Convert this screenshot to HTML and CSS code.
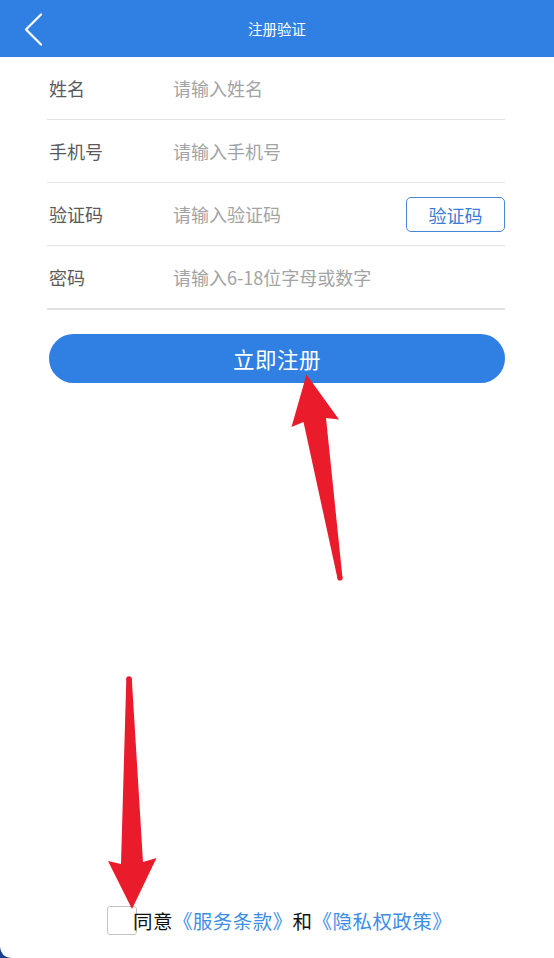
FILE: index.html
```html
<!DOCTYPE html>
<html lang="zh-CN">
<head>
<meta charset="utf-8">
<title>注册验证</title>
<link rel="stylesheet" href="styles.css">
</head>
<body>
<div class="page">
  <header class="topbar">
    <button class="back" aria-label="返回">
      <svg width="20" height="34" viewBox="0 0 20 34"><polyline points="17,1.5 2,16.5 17,31.5" fill="none" stroke="#fff" stroke-width="2.2" stroke-linecap="round" stroke-linejoin="round"/></svg>
    </button>
    <h1 class="title">注册验证</h1>
  </header>

  <form class="form">
    <div class="row">
      <label class="label">姓名</label>
      <input class="field" type="text" placeholder="请输入姓名">
    </div>
    <div class="row">
      <label class="label">手机号</label>
      <input class="field" type="tel" placeholder="请输入手机号">
    </div>
    <div class="row">
      <label class="label">验证码</label>
      <input class="field" type="text" placeholder="请输入验证码">
      <button type="button" class="code-btn">验证码</button>
    </div>
    <div class="row last">
      <label class="label">密码</label>
      <input class="field" type="password" placeholder="请输入6-18位字母或数字">
    </div>
    <button type="button" class="submit">立即注册</button>
  </form>

  <div class="agree">
    <span class="check"></span>
    <span class="agree-text">同意<a class="link">《服务条款》</a>和<a class="link">《隐私权政策》</a></span>
  </div>

  <svg class="annot" width="554" height="958" viewBox="0 0 554 958" aria-hidden="true">
    <polygon fill="#EA1B2A" points="306.5,374.5 339,419.5 326,418 342.5,578 337.5,578.5 303.5,422 291.5,427"/>
    <circle cx="340" cy="578" r="2.6" fill="#EA1B2A"/>
    <polygon fill="#EA1B2A" points="126.3,679 131.8,679 143,862 156.5,858 132,909 108,861 121,864"/>
    <circle cx="129" cy="679" r="2.8" fill="#EA1B2A"/>
    <path d="M0 947 Q1 957 11 958 L0 958 Z" fill="#1E3F8C"/>
  </svg>
</div>
</body>
</html>
```

FILE: styles.css
```css
* { box-sizing: border-box; }

html, body {
  margin: 0;
  padding: 0;
  background: #fff;
}

body {
  font-family: "Noto Sans CJK SC", "Noto Sans", "Liberation Sans", sans-serif;
}

.page {
  position: relative;
  width: 554px;
  height: 958px;
  display: flex;
  flex-direction: column;
  overflow: hidden;
}

.topbar {
  height: 57px;
  background: #3080E4;
  display: flex;
  align-items: center;
  justify-content: center;
  position: relative;
  flex-shrink: 0;
}

.back {
  position: absolute;
  left: 24px;
  top: 13px;
  width: 20px;
  height: 34px;
  padding: 0;
  border: 0;
  background: transparent;
  display: flex;
}

.title {
  margin: 0;
  font-size: 14.5px;
  font-weight: normal;
  color: #fff;
  letter-spacing: 0;
}

.form {
  margin: 0 49px 0 47px;
  display: flex;
  flex-direction: column;
}

.row {
  height: 63px;
  display: flex;
  align-items: center;
  border-bottom: 1px solid #e3e3e3;
  padding-left: 2px;
}

.row.last {
  border-bottom: 2px solid #e0e0e0;
  height: 64px;
}

.label {
  width: 124px;
  font-size: 18px;
  color: #5a5a5a;
  flex-shrink: 0;
}

.field {
  flex: 1;
  min-width: 0;
  border: 0;
  outline: none;
  padding: 0;
  font-family: inherit;
  font-size: 18px;
  color: #333;
  background: transparent;
}

.field::placeholder {
  color: #a3a3a3;
}

.code-btn {
  width: 99px;
  height: 35px;
  border: 1px solid #4A86D8;
  border-radius: 5px;
  background: #fff;
  color: #3B7CD6;
  font-family: inherit;
  font-size: 18px;
  padding: 0;
  margin-top: 1px;
}

.submit {
  margin: 24px 0 0 2px;
  height: 49px;
  border: 0;
  border-radius: 25px;
  background: #3080E4;
  color: #fff;
  font-family: inherit;
  font-size: 21.5px;
  padding: 0;
  letter-spacing: 0.5px;
}

.agree {
  margin-top: auto;
  margin-bottom: 23px;
  padding-left: 107px;
  height: 29px;
  display: flex;
  align-items: center;
}

.check {
  width: 30px;
  height: 29px;
  border: 1.5px solid #c4c4c4;
  border-radius: 3px;
  background: #fff;
  flex-shrink: 0;
}

.agree-text {
  margin-left: -4px;
  font-size: 19.5px;
  letter-spacing: 0.45px;
  color: #111;
  white-space: nowrap;
}

.link {
  color: #3E8EE6;
}

.annot {
  position: absolute;
  left: 0;
  top: 0;
  pointer-events: none;
}
```
